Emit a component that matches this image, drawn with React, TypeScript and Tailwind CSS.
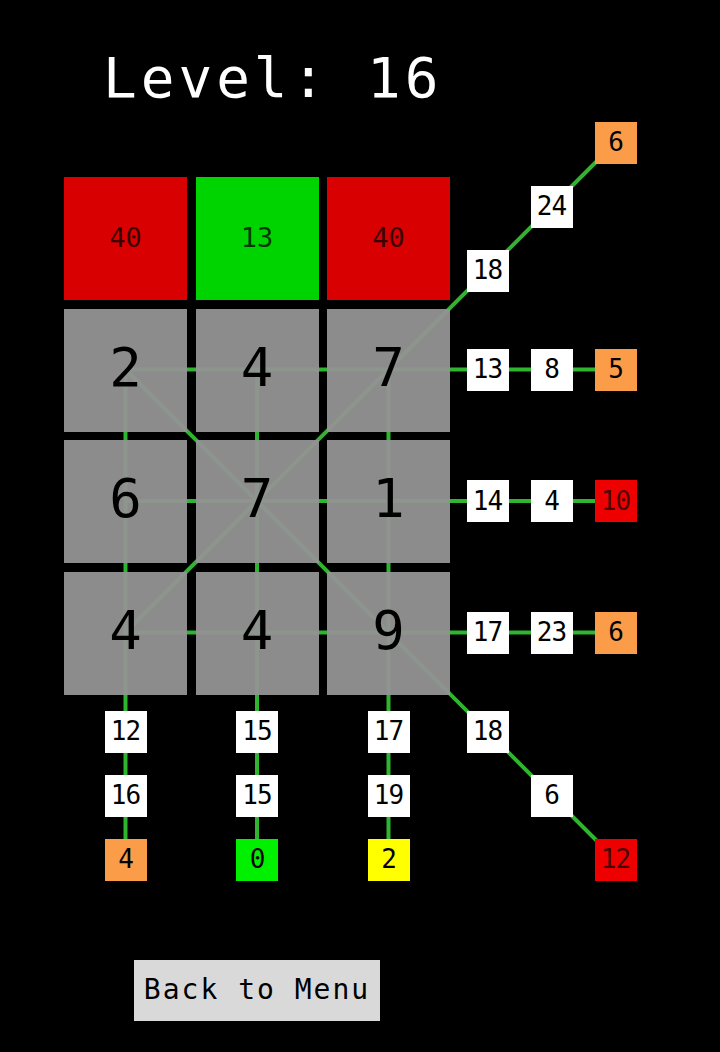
import React from 'react';

interface Node {
  x: number;
  y: number;
  value: number;
  tone: 'white' | 'orange' | 'red' | 'green' | 'yellow';
}

const COLS = [125.5, 257, 388.5];
const ROWS = [369.5, 501, 632.5];
const SIDE = [487.5, 551.5, 615.5];
const BELOW = [731.5, 795.5, 859.5];

const header = [
  { value: 40, color: 'bg-[#d80000]' },
  { value: 13, color: 'bg-[#00d400]' },
  { value: 40, color: 'bg-[#d80000]' },
];

const board = [
  [2, 4, 7],
  [6, 7, 1],
  [4, 4, 9],
];

const toneClass: Record<Node['tone'], string> = {
  white: 'bg-white',
  orange: 'bg-[#fb9c48]',
  red: 'bg-[#ee0000] text-black/70',
  green: 'bg-[#00f000]',
  yellow: 'bg-[#ffff00]',
};

const rowNodes: [number, number, Node['tone']][] = [
  [13, 8, 'orange'],
  [14, 4, 'red'],
  [17, 23, 'orange'],
];
const colNodes: [number, number, Node['tone']][] = [
  [12, 16, 'orange'],
  [15, 15, 'green'],
  [17, 19, 'yellow'],
];
const lastValues = { rows: [5, 10, 6], cols: [4, 0, 2] };

const nodes: Node[] = [
  ...rowNodes.flatMap(([a, b, tone], i) => [
    { x: SIDE[0], y: ROWS[i], value: a, tone: 'white' as const },
    { x: SIDE[1], y: ROWS[i], value: b, tone: 'white' as const },
    { x: SIDE[2], y: ROWS[i], value: lastValues.rows[i], tone },
  ]),
  ...colNodes.flatMap(([a, b, tone], i) => [
    { x: COLS[i], y: BELOW[0], value: a, tone: 'white' as const },
    { x: COLS[i], y: BELOW[1], value: b, tone: 'white' as const },
    { x: COLS[i], y: BELOW[2], value: lastValues.cols[i], tone },
  ]),
  // anti-diagonal (up to the right)
  { x: SIDE[0], y: 270.5, value: 18, tone: 'white' },
  { x: SIDE[1], y: 206.5, value: 24, tone: 'white' },
  { x: SIDE[2], y: 142.5, value: 6, tone: 'orange' },
  // main diagonal (down to the right)
  { x: SIDE[0], y: BELOW[0], value: 18, tone: 'white' },
  { x: SIDE[1], y: BELOW[1], value: 6, tone: 'white' },
  { x: SIDE[2], y: BELOW[2], value: 12, tone: 'red' },
];

const mono = { fontFamily: '"DejaVu Sans Mono", "Liberation Mono", monospace' };

export default function App() {
  return (
    <div className="relative w-[720px] h-[1052px] bg-black overflow-hidden" style={mono}>
      <svg className="absolute inset-0 z-0" width={720} height={1052}>
        <g stroke="#2fb52f" strokeWidth={4}>
          {ROWS.map((y) => (
            <line key={`h${y}`} x1={COLS[0]} y1={y} x2={SIDE[2]} y2={y} />
          ))}
          {COLS.map((x) => (
            <line key={`v${x}`} x1={x} y1={ROWS[0]} x2={x} y2={BELOW[2]} />
          ))}
          <line x1={COLS[0]} y1={ROWS[0]} x2={SIDE[2]} y2={BELOW[2]} />
          <line x1={COLS[0]} y1={ROWS[2]} x2={SIDE[2]} y2={142.5} />
        </g>
      </svg>

      <h1 className="relative z-10 pt-[50px] pl-[103px] text-[56px] leading-[56px] text-white tracking-[4px]">
        Level: 16
      </h1>

      <div className="relative z-10 mt-[71px] ml-[64px] grid grid-cols-[123px_123px_123px] auto-rows-[123px] gap-[8.5px] w-max">
        {header.map((h, i) => (
          <div key={i} className={`${h.color} flex items-center justify-center text-[27px] text-black/75`}>
            {h.value}
          </div>
        ))}
        {board.flat().map((n, i) => (
          <div key={i} className="bg-[#949494]/95 flex items-center justify-center pb-[6px] text-[54px] text-black">
            {n}
          </div>
        ))}
      </div>

      {nodes.map((n, i) => (
        <div
          key={i}
          className={`absolute z-20 w-[42px] h-[42px] flex items-center justify-center text-[26px] tracking-[-1px] text-black ${toneClass[n.tone]}`}
          style={{ left: n.x - 21, top: n.y - 21 }}
        >
          {n.value}
        </div>
      ))}

      <button className="relative z-10 mt-[265px] ml-[134px] w-[246px] h-[61px] bg-[#d9d9d9] text-black text-[28px] tracking-[2px] flex items-center justify-center">
        Back to Menu
      </button>
    </div>
  );
}
